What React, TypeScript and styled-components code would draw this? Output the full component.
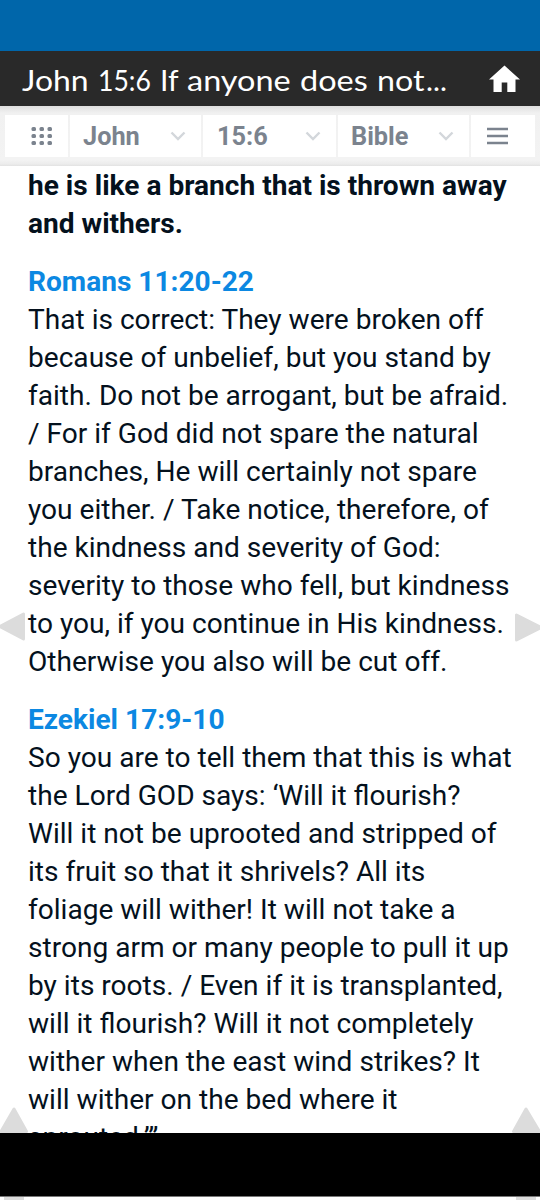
import React from "react";
import styled, { createGlobalStyle } from "styled-components";

const Global = createGlobalStyle`
  *, *::before, *::after { box-sizing: border-box; }
  body { margin: 0; background: #fff; overflow: hidden; }
`;

const Screen = styled.div`
  position: relative;
  width: 540px;
  height: 1200px;
  overflow: hidden;
  display: flex;
  flex-direction: column;
  background: #fff;
  font-family: Roboto, sans-serif;
`;

const StatusBar = styled.div`
  flex: 0 0 51px;
  background: #0066aa;
`;

const TitleBar = styled.header`
  flex: 0 0 55px;
  display: flex;
  align-items: center;
  justify-content: space-between;
  padding: 0 20px 0 22px;
  background: #292929;
`;

const Title = styled.h1`
  display: flex;
  margin: 0;
  padding-top: 2px;
  font: 400 29.5px/36px Lato, sans-serif;
  white-space: pre;
  color: #fff;
`;

const Word = styled.span<{ $w: number; $stretch: number }>`
  flex: 0 0 ${(p) => p.$w}px;
  min-width: 0;
  transform: scaleX(${(p) => p.$stretch});
  transform-origin: left center;
`;

const Toolbar = styled.nav`
  flex: 0 0 60px;
  display: flex;
  gap: 2px;
  padding: 9px 5px;
  background: linear-gradient(#dedede 0, #f1f1f1 7px, #f3f3f3 54px, #ececec 58px, #e2e2e2 60px);
`;

const Cell = styled.div<{ $w: number; $left: number; $right?: number }>`
  flex: 0 0 ${(p) => p.$w}px;
  display: flex;
  align-items: center;
  justify-content: space-between;
  padding: 0 ${(p) => p.$right ?? 0}px 0 ${(p) => p.$left}px;
  background: #fff;
  color: #7b838e;
`;

const CellText = styled.span`
  padding-top: 1px;
  font: 700 25.3px/41px Roboto, sans-serif;
`;

const Content = styled.main`
  flex: 0 0 967px;
  overflow: hidden;
  padding: 1px 0 0 28px;
  color: #04111d;
  font-size: 28.08px;
  line-height: 38px;
`;

const Verse = styled.section`
  margin-bottom: 20px;
`;

const Line = styled.div<{ $bold?: boolean }>`
  white-space: nowrap;
  font-weight: ${(p) => (p.$bold ? 700 : 400)};
`;

const Reference = styled(Line)`
  color: #0c88e2;
  font-weight: 700;
`;

const NavBar = styled.div`
  flex: 0 0 64px;
  background: #000;
  border-bottom: 1px solid #777;
`;

const Arrow = styled.svg<{ $x: number; $y: number }>`
  position: absolute;
  left: ${(p) => p.$x}px;
  top: ${(p) => p.$y}px;
  fill: #dcdcdc;
  stroke: #dcdcdc;
  stroke-width: 3;
  stroke-linejoin: round;
`;

const Chevron = () => (
  <svg width="16" height="10" viewBox="0 0 16 10" fill="none" stroke="#d3d7db" strokeWidth="2.400">
    <path d="M1.5 1.5 8 8l6.500-6.500" />
  </svg>
);

const titleWords: [string, number, number][] = [
  ["John ", 76, 1.08],
  ["15:6 ", 62, 0.9],
  ["If ", 27, 1.02],
  ["anyone ", 113, 1.1],
  ["does ", 77, 1.1],
  ["not", 49, 1.09],
  ["...", 24, 1],
];

const romans = [
  "That is correct: They were broken off",
  "because of unbelief, but you stand by",
  "faith. Do not be arrogant, but be afraid.",
  "/ For if God did not spare the natural",
  "branches, He will certainly not spare",
  "you either. / Take notice, therefore, of",
  "the kindness and severity of God:",
  "severity to those who fell, but kindness",
  "to you, if you continue in His kindness.",
  "Otherwise you also will be cut off.",
];

const ezekiel = [
  "So you are to tell them that this is what",
  "the Lord GOD says: ‘Will it flourish?",
  "Will it not be uprooted and stripped of",
  "its fruit so that it shrivels? All its",
  "foliage will wither! It will not take a",
  "strong arm or many people to pull it up",
  "by its roots. / Even if it is transplanted,",
  "will it flourish? Will it not completely",
  "wither when the east wind strikes? It",
  "will wither on the bed where it",
  "sprouted.’”",
];

export default function App() {
  return (
    <>
      <Global />
      <Screen>
        <StatusBar />
        <TitleBar>
          <Title>
            {titleWords.map(([text, w, stretch]) => (
              <Word key={text} $w={w} $stretch={stretch}>{text}</Word>
            ))}
          </Title>
          <svg width="31" height="28" viewBox="0 0 31 28" fill="#fff">
            <path d="M15.500 0.500 31 14.500h-4.500v12.500h-8.200V17.500h-5.600v9.500H4.500V14.500H0Z" />
          </svg>
        </TitleBar>
        <Toolbar>
          <Cell $w={62.5} $left={26}>
            <svg width="22" height="18" viewBox="0 0 22 18" fill="#7b838e">
              {[0, 7, 14].map((y) =>
                [0.5, 8.5, 16.5].map((x) => (
                  <rect key={`${x}-${y}`} x={x} y={y} width="4.500" height="4" rx="1.500" />
                ))
              )}
            </svg>
          </Cell>
          <Cell $w={131.5} $left={13.5} $right={15}>
            <CellText>John</CellText>
            <Chevron />
          </Cell>
          <Cell $w={132.5} $left={14} $right={15}>
            <CellText>15:6</CellText>
            <Chevron />
          </Cell>
          <Cell $w={131.5} $left={13.5} $right={15}>
            <CellText>Bible</CellText>
            <Chevron />
          </Cell>
          <Cell $w={64} $left={15.5}>
            <svg width="22" height="18" viewBox="0 0 22 18" stroke="#7b838e" strokeWidth="2.500">
              <path d="M0 2h21M0 9h21M0 16h21" />
            </svg>
          </Cell>
        </Toolbar>
        <Content>
          <Verse>
            <Line $bold>he is like a branch that is thrown away</Line>
            <Line $bold>and withers.</Line>
          </Verse>
          <Verse>
            <Reference>Romans 11:20-22</Reference>
            {romans.map((t) => (
              <Line key={t}>{t}</Line>
            ))}
          </Verse>
          <Verse>
            <Reference>Ezekiel 17:9-10</Reference>
            {ezekiel.map((t) => (
              <Line key={t}>{t}</Line>
            ))}
          </Verse>
        </Content>
        <Arrow $x={-2} $y={612} width="27" height="29">
          <path d="M25.500 2v25L2 14.500Z" />
        </Arrow>
        <Arrow $x={514} $y={612} width="30" height="31">
          <path d="M2.500 3v25L27 15.500Z" />
        </Arrow>
        <Arrow $x={0} $y={1106} width="28" height="27">
          <path d="M14 3 1 25.500h25.500Z" />
        </Arrow>
        <Arrow $x={512} $y={1106} width="28" height="27">
          <path d="M14 3 1.500 25.500h26Z" />
        </Arrow>
        <NavBar />
        <Arrow $x={0} $y={1197} width="28" height="3">
          <path d="M4 1.500h20" />
        </Arrow>
        <Arrow $x={512} $y={1197} width="28" height="3">
          <path d="M4 1.500h20" />
        </Arrow>
      </Screen>
    </>
  );
}
